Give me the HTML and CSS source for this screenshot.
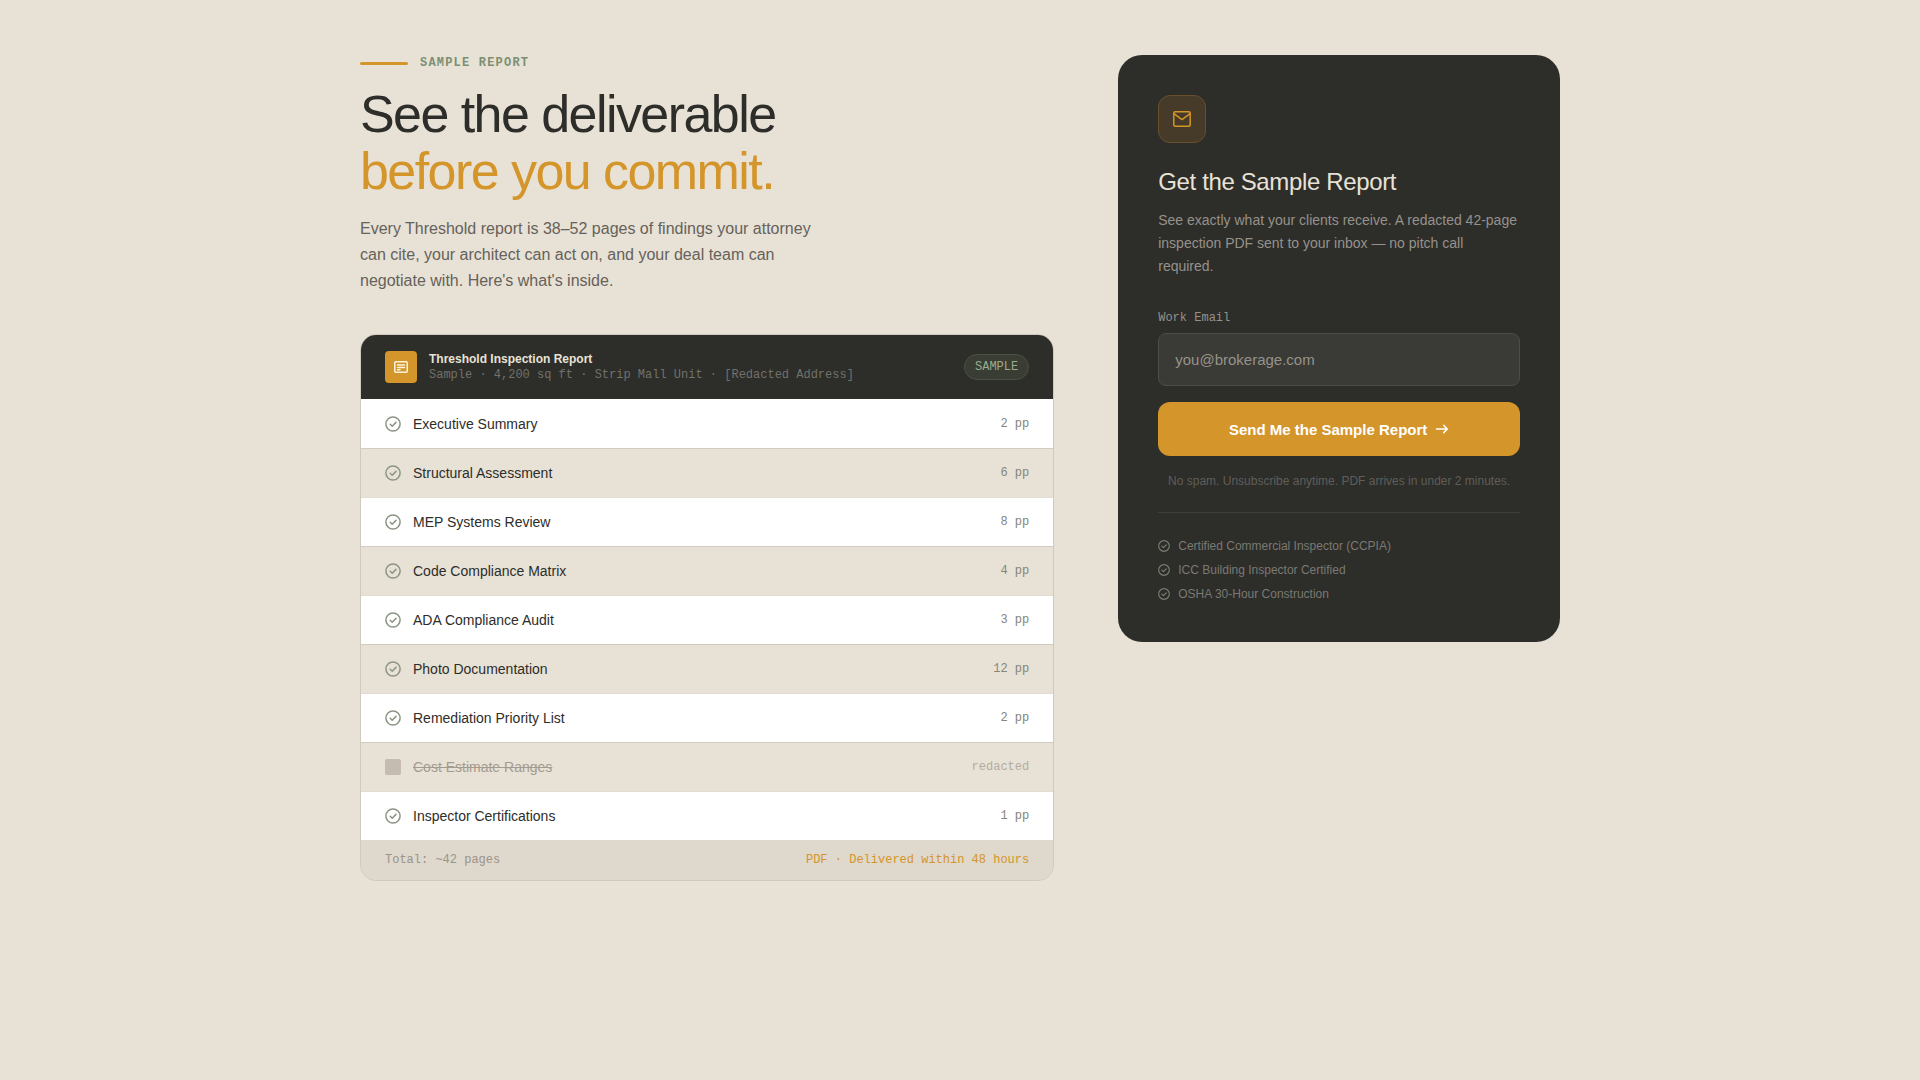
FILE: index.html
```html
<!DOCTYPE html>
<html lang="en">
<head>
  <meta charset="utf-8">
  <meta name="viewport" content="width=device-width, initial-scale=1">
  <title>Sample Report</title>
  <link rel="stylesheet" href="styles.css">
</head>
<body>
<!-- shared check icon -->
<svg class="sprite" aria-hidden="true">
  <symbol id="check" viewBox="0 0 16 16">
    <circle cx="8" cy="8" r="7.1" />
    <path d="M5.2 8.2l2 2L11 6.4" />
  </symbol>
</svg>

<main class="container">
  <section class="intro">
    <div class="eyebrow">SAMPLE REPORT</div>
    <h1>See the deliverable<br><span class="accent">before you commit.</span></h1>
    <p class="lead">Every Threshold report is 38–52 pages of findings your attorney can cite, your architect can act on, and your deal team can negotiate with. Here's what's inside.</p>

    <div class="report">
      <div class="report-header">
        <div class="report-icon">
          <svg width="16" height="16" viewBox="0 0 16 16">
            <rect x="1.75" y="2.75" width="12.5" height="10.5" rx="1" />
            <path d="M4.5 6h7M4.5 8.4h7M4.5 10.8h2.5" />
          </svg>
        </div>
        <div class="report-name">
          <h2>Threshold Inspection Report</h2>
          <p>Sample · 4,200 sq ft · Strip Mall Unit · [Redacted Address]</p>
        </div>
        <span class="badge">SAMPLE</span>
      </div>
      <ul class="sections">
        <li><svg class="check"><use href="#check" /></svg><span>Executive Summary</span><span class="pages">2 pp</span></li>
        <li><svg class="check"><use href="#check" /></svg><span>Structural Assessment</span><span class="pages">6 pp</span></li>
        <li><svg class="check"><use href="#check" /></svg><span>MEP Systems Review</span><span class="pages">8 pp</span></li>
        <li><svg class="check"><use href="#check" /></svg><span>Code Compliance Matrix</span><span class="pages">4 pp</span></li>
        <li><svg class="check"><use href="#check" /></svg><span>ADA Compliance Audit</span><span class="pages">3 pp</span></li>
        <li><svg class="check"><use href="#check" /></svg><span>Photo Documentation</span><span class="pages">12 pp</span></li>
        <li><svg class="check"><use href="#check" /></svg><span>Remediation Priority List</span><span class="pages">2 pp</span></li>
        <li class="redacted"><span class="block"></span><s>Cost Estimate Ranges</s><span class="pages">redacted</span></li>
        <li><svg class="check"><use href="#check" /></svg><span>Inspector Certifications</span><span class="pages">1 pp</span></li>
      </ul>
      <div class="report-footer">
        <span>Total: ~42 pages</span>
        <span class="accent">PDF · Delivered within 48 hours</span>
      </div>
    </div>
  </section>

  <aside class="signup">
    <div class="mail-icon">
      <svg width="20" height="20" viewBox="0 0 20 20">
        <rect x="1.8" y="2.8" width="16.4" height="14.4" rx="1.2" />
        <path d="M2 4.6l8 6 8-6" />
      </svg>
    </div>
    <h2>Get the Sample Report</h2>
    <p class="signup-text">See exactly what your clients receive. A redacted 42-page inspection PDF sent to your inbox — no pitch call required.</p>
    <form onsubmit="return false">
      <label for="email">Work Email</label>
      <input id="email" type="email" placeholder="you@brokerage.com">
      <button type="submit">Send Me the Sample Report
        <svg width="14" height="14" viewBox="0 0 14 14"><path d="M1.5 7h11M8.7 3.4L12.3 7l-3.6 3.6" /></svg>
      </button>
    </form>
    <p class="note">No spam. Unsubscribe anytime. PDF arrives in under 2 minutes.</p>
    <ul class="credentials">
      <li><svg class="check"><use href="#check" /></svg>Certified Commercial Inspector (CCPIA)</li>
      <li><svg class="check"><use href="#check" /></svg>ICC Building Inspector Certified</li>
      <li><svg class="check"><use href="#check" /></svg>OSHA 30-Hour Construction</li>
    </ul>
  </aside>
</main>
</body>
</html>
```
FILE: styles.css
```css
* {
  box-sizing: border-box;
  margin: 0;
  padding: 0;
}

body {
  background-color: #e8e2d6;
  color: #2d2d2a;
  font-family: "Liberation Sans", Arial, sans-serif;
}

ul {
  list-style: none;
}

svg {
  flex-shrink: 0;
  fill: none;
  stroke: currentColor;
  stroke-width: 1.5;
  stroke-linecap: round;
  stroke-linejoin: round;
}

.sprite {
  display: none;
}

.container {
  max-width: 1248px;
  margin: 0 auto;
  padding: 55px 24px;
  display: grid;
  grid-template-columns: 11fr 7fr;
  gap: 64px;
  align-items: start;
}

.accent {
  color: #d4952a;
}

/* Left column */

.eyebrow {
  display: flex;
  align-items: center;
  gap: 12px;
  margin-bottom: 14px;
  color: #7d8f72;
  font-family: "Liberation Mono", monospace;
  font-size: 12px;
  font-weight: bold;
  line-height: 17px;
  letter-spacing: 0.1em;
}

.eyebrow::before {
  content: "";
  width: 48px;
  height: 3px;
  border-radius: 2px;
  background-color: #d4952a;
}

h1 {
  margin-bottom: 16px;
  font-size: 52px;
  font-weight: normal;
  line-height: 57px;
  letter-spacing: -0.03em;
}

.lead {
  max-width: 480px;
  margin-bottom: 40px;
  color: #66615a;
  font-size: 16px;
  line-height: 26px;
}

.report {
  overflow: hidden;
  border: 1px solid #cfcabd;
  border-radius: 16px;
}

.report-header {
  display: flex;
  align-items: center;
  gap: 12px;
  padding: 16px 24px;
  background-color: #2d2d2a;
}

.report-icon {
  display: flex;
  align-items: center;
  justify-content: center;
  width: 32px;
  height: 32px;
  border-radius: 4px;
  background-color: #d4952a;
  color: #fff3dc;
}

.report-name {
  flex: 1;
  line-height: 16px;
}

.report-name h2 {
  color: #e8e2d6;
  font-size: 12px;
}

.report-name p {
  color: #72716b;
  font-family: "Liberation Mono", monospace;
  font-size: 12px;
}

.badge {
  padding: 4px 10px;
  border: 1px solid #4b5143;
  border-radius: 13px;
  background-color: #3a3d34;
  color: #9bab8e;
  font-family: "Liberation Mono", monospace;
  font-size: 12px;
  line-height: 16px;
}

.sections li {
  display: flex;
  align-items: center;
  gap: 12px;
  padding: 14px 24px;
  border-top: 1px solid #e3ddd1;
  background-color: #fff;
  font-size: 14px;
  line-height: 20px;
}

.sections li:nth-child(even) {
  border-top-color: #d0ccc0;
  background-color: #e8e2d6;
}

.sections li:first-child {
  border-top-color: #fff;
}

.check {
  width: 16px;
  height: 16px;
  color: #8b9583;
}

.pages {
  margin-left: auto;
  color: #85857b;
  font-family: "Liberation Mono", monospace;
  font-size: 12px;
}

.block {
  width: 16px;
  height: 16px;
  border-radius: 2px;
  background-color: #c4bcb0;
}

.redacted {
  color: #a39b90;
}

.redacted .pages {
  color: #b3aca0;
}

.report-footer {
  display: flex;
  justify-content: space-between;
  padding: 12px 24px;
  background-color: #dfd8cc;
  color: #9a938a;
  font-family: "Liberation Mono", monospace;
  font-size: 12px;
  line-height: 16px;
}

/* Right column */

.signup {
  padding: 40px;
  border-radius: 24px;
  background-color: #2d2d2a;
}

.mail-icon {
  display: flex;
  align-items: center;
  justify-content: center;
  width: 48px;
  height: 48px;
  margin-bottom: 24px;
  border: 1px solid #69502a;
  border-radius: 12px;
  background-color: #463a29;
  color: #d4952a;
}

.signup h2 {
  margin-bottom: 12px;
  color: #e8e2d6;
  font-size: 24px;
  font-weight: normal;
  line-height: 30px;
  letter-spacing: -0.015em;
}

.signup-text {
  margin-bottom: 32px;
  color: #96928a;
  font-size: 14px;
  line-height: 23px;
}

.signup label {
  display: block;
  margin-bottom: 7px;
  color: #96928a;
  font-family: "Liberation Mono", monospace;
  font-size: 12px;
  line-height: 16px;
}

.signup input {
  display: block;
  width: 100%;
  height: 53px;
  margin-bottom: 16px;
  padding: 0 16px;
  border: 1px solid #4c4c48;
  border-radius: 8px;
  background-color: #3a3a36;
  color: #e8e2d6;
  font-family: inherit;
  font-size: 15px;
}

.signup input::placeholder {
  color: #96928a;
}

.signup button {
  display: flex;
  align-items: center;
  justify-content: center;
  gap: 8px;
  width: 100%;
  height: 54px;
  margin-bottom: 16px;
  border: none;
  border-radius: 12px;
  background-color: #d4952a;
  color: #fff;
  font-family: inherit;
  font-size: 15px;
  font-weight: bold;
  cursor: pointer;
}

.note {
  margin-bottom: 22px;
  color: #5f5e59;
  font-size: 12px;
  line-height: 18px;
  text-align: center;
}

.credentials {
  display: flex;
  flex-direction: column;
  gap: 8px;
  padding-top: 25px;
  border-top: 1px solid #3e3e3a;
  color: #7b7972;
  font-size: 12px;
  line-height: 16px;
}

.credentials li {
  display: flex;
  align-items: center;
  gap: 8px;
}

.credentials .check {
  width: 12px;
  height: 12px;
  color: #7a8073;
}

@media (max-width: 900px) {
  .container {
    grid-template-columns: 1fr;
  }
}
```
